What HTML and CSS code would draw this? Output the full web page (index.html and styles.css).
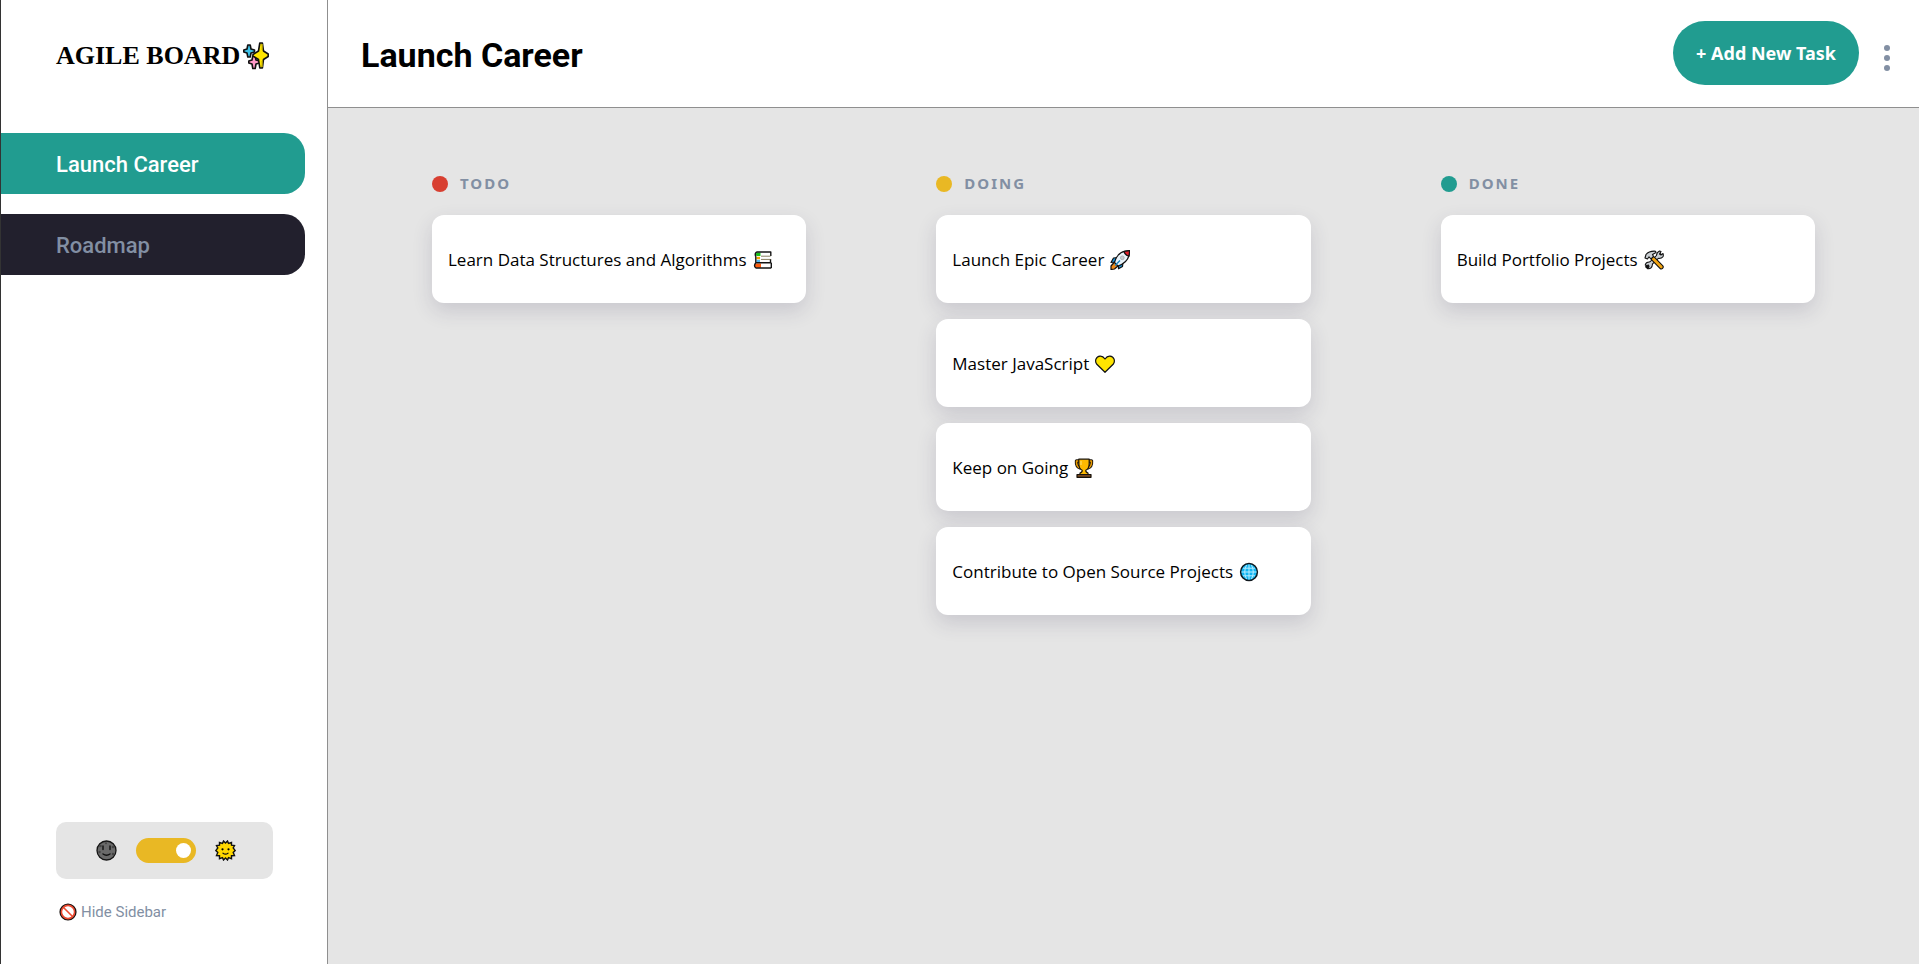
FILE: index.html
```html
<!DOCTYPE html>
<html lang="en">
<head>
<meta charset="utf-8">
<title>Agile Board</title>
<link rel="stylesheet" href="styles.css">
</head>
<body>
<div class="app">
  <aside class="sidebar">
    <div class="logo">
      <span>AGILE BOARD</span>
      <svg class="logo-icon" viewBox="0 0 26 28" aria-hidden="true" stroke="#111" stroke-width="1.6" stroke-linejoin="round">
        <path fill="#3fc4ea" d="M4.800 3H7.200L8 7L11.500 8V10L8 11L7.200 15H4.800L4 11L.8 10V8L4 7Z"/>
        <path fill="#ff9ac8" d="M9.800 14H12.200L13 18L16.500 19V21L13 22L12.200 26.500H9.800L9 22L5.800 21V19L9 18Z"/>
        <path fill="#ffe500" d="M16.800 1H19.400L20.500 9L25.200 12V14.500L20.500 17.500L19.400 26H16.800L15.500 17.500L10 14V12.500L15.500 9Z"/>
        <path fill="none" stroke="#a89400" stroke-width="1.200" d="M19.300 2V8M19.300 19V25"/>
      </svg>
    </div>
    <nav class="boards" aria-label="Boards">
      <button class="board active" type="button">Launch Career</button>
      <button class="board" type="button">Roadmap</button>
    </nav>
    <div class="sidebar-foot">
      <div class="theme">
        <svg class="face" viewBox="0 0 21 21" aria-hidden="true">
          <circle cx="10.500" cy="10.500" r="9.500" fill="#6a6a6a" stroke="#151515" stroke-width="1.300"/>
          <g fill="#444"><circle cx="4.500" cy="6" r="1.300"/><circle cx="3.500" cy="12" r="1.200"/><circle cx="17" cy="7" r="1.300"/><circle cx="17" cy="14" r="1.200"/><circle cx="10" cy="3.300" r="1"/></g>
          <path d="M7 6v3.500M14 6v3.500M7 14q3.500 2.400 7 0" fill="none" stroke="#111" stroke-width="1.400" stroke-linecap="round"/>
        </svg>
        <label class="switch">
          <input type="checkbox" role="switch" aria-label="Light theme" checked>
        </label>
        <svg class="face" viewBox="0 0 21 21" aria-hidden="true">
          <path fill="#ffd800" stroke="#111" stroke-width="1.400" stroke-linejoin="miter" d="M10.500 3L12.500 1L13.500 3.500L16.500 2.500L16.500 5.200L19.500 5.500L18.200 8L20.200 10.500L18.200 12.500L19.500 15.500L16.500 15.700L16.500 18.700L13.500 17.700L12.500 20L10.500 18L8.500 20L7.500 17.700L4.500 18.700L4.500 15.700L1.500 15.500L2.800 12.500L.8 10.500L2.800 8L1.500 5.500L4.500 5.200L4.500 2.500L7.500 3.500L8.500 1Z"/>
          <circle cx="7.500" cy="9.300" r="1.100"/><circle cx="13.500" cy="9.300" r="1.100"/>
          <path d="M8 13.200q2.500 2 5 0" fill="none" stroke="#111" stroke-width="1.200" stroke-linecap="round"/>
        </svg>
      </div>
      <button class="hide" type="button">
        <svg class="hide-icon" viewBox="0 0 18 18" aria-hidden="true" fill="none">
          <circle cx="9" cy="9" r="7.400" fill="#fff" stroke="#16110f" stroke-width="2.400"/>
          <circle cx="9" cy="9" r="6.600" stroke="#ee4b32" stroke-width="1.600"/>
          <path d="M4.500 4.500l9 9" stroke="#ee4b32" stroke-width="1.600"/>
        </svg>
        <span>Hide Sidebar</span>
      </button>
    </div>
  </aside>

  <div class="content">
    <header class="topbar">
      <h1>Launch Career</h1>
      <div class="actions">
        <button class="add" type="button">+ Add New Task</button>
        <button class="more" type="button" aria-label="Board options">
          <svg viewBox="0 0 6 26" aria-hidden="true"><circle cx="3" cy="3" r="3"/><circle cx="3" cy="13" r="3"/><circle cx="3" cy="23" r="3"/></svg>
        </button>
      </div>
    </header>

    <main class="columns">
      <section class="column">
        <h2><span class="dot todo"></span>TODO</h2>
        <article class="card">
          <span>Learn Data Structures and Algorithms</span>
          <svg viewBox="0 0 20 20" aria-hidden="true">
            <path fill="#fff" d="M3.500 2H18V18H2.500V8z"/>
            <path fill="#17bf1c" d="M3.500 2.500H7.500V6H3.500q-1.500-1.700 0-3.500z"/>
            <path fill="#f6a800" d="M3.500 6.800H7V9.200H3.500z"/>
            <path fill="#52b9f2" d="M3.500 9.800H7V12.800H3.500z"/>
            <path fill="#ff5b0c" d="M2.500 13.500H8V17.800H2.500q-2-2 0-4.300z"/>
            <path stroke="#141414" stroke-width="1.400" fill="none" stroke-linejoin="round" d="M18.300 2H4Q1.500 2.600 2.600 6.200M2.800 6.200V12.800H18.300M18.300 18H3Q.2 16 2.800 12.800M17.800 2V6M17.500 9V12.800M18.300 12.800V18"/>
            <path stroke="#8a8060" stroke-width="1" d="M8 6.200H17.500M8 9.400H17.500"/>
          </svg>
        </article>
      </section>

      <section class="column">
        <h2><span class="dot doing"></span>DOING</h2>
        <article class="card">
          <span>Launch Epic Career</span>
          <svg viewBox="0 0 20 20" aria-hidden="true" stroke="#111" stroke-width="1.200" stroke-linejoin="round">
            <path fill="#199be8" d="M8 7.500L3.500 8L1 12.500L5 12zM13 12L12.500 16.500L8.500 18.800L8.500 15z"/>
            <path fill="#f28a16" d="M4.500 12L1 16V19.500L4.500 19L8.500 15.500z"/>
            <path fill="#e9f3fa" d="M4.500 12.500Q7 3 15 1.200L19.500.7L19 5.500Q17 13 8 16z"/>
            <path fill="#e5202c" d="M14 1.500L19.700.6L19 6.200Q15 5.500 14 1.500z"/>
            <circle cx="12.300" cy="7.800" r="1.900" fill="#c6cbd0" stroke="#999" stroke-width=".6"/>
            <path d="M5 15.500L10 10.500" stroke="#1584c4" stroke-width="1.500"/>
          </svg>
        </article>
        <article class="card">
          <span>Master JavaScript</span>
          <svg viewBox="0 0 20 20" aria-hidden="true"><path fill="#ffe500" stroke="#111" stroke-width="1.200" stroke-linejoin="round" d="M10 18.300L1.600 10C-.5 7 1 2.500 5 2.200Q8 2 10 5Q12 2 15 2.200C19 2.500 20.500 7 18.400 10z"/></svg>
        </article>
        <article class="card">
          <span>Keep on Going</span>
          <svg viewBox="0 0 20 20" aria-hidden="true" stroke="#17120b" stroke-width="1.200" stroke-linejoin="round">
            <path fill="none" stroke-width="3.400" d="M5 3H2.500Q2 9 6.500 10M15 3H17.500Q18 9 13.500 10"/>
            <path fill="none" stroke="#e79a00" stroke-width="1.500" d="M5 3H2.500Q2 9 6.500 10M15 3H17.500Q18 9 13.500 10"/>
            <path fill="#fdb900" d="M4.800 1.200H15.200V6Q15 11 11.800 12.300Q11.500 14 14 15V16.500H6V15Q8.500 14 8.200 12.300Q5 11 4.800 6z"/>
            <path fill="#76491f" d="M3 16.500H17V19.300H3z"/>
            <path stroke="#ffdc63" d="M7 3v4"/>
          </svg>
        </article>
        <article class="card">
          <span>Contribute to Open Source Projects</span>
          <svg viewBox="0 0 20 20" aria-hidden="true" fill="none">
            <circle cx="10" cy="10" r="8.400" fill="#10b5f2" stroke="#10171c" stroke-width="1.500"/>
            <path stroke="#b9edff" stroke-width="1" d="M10 2.500V17.500M2.500 10H17.500M4 6.200H16M4 13.800H16M7.500 3Q4 10 7.500 17M12.500 3Q16 10 12.500 17"/>
          </svg>
        </article>
      </section>

      <section class="column">
        <h2><span class="dot done"></span>DONE</h2>
        <article class="card">
          <span>Build Portfolio Projects</span>
          <svg viewBox="0 0 20 20" aria-hidden="true" stroke-linecap="round" stroke-linejoin="round" fill="none">
            <path stroke="#111" stroke-width="4.400" d="M3.500 16.500L15.500 5"/>
            <path fill="#cbd0d4" stroke="#111" stroke-width="1.100" d="M13 7.500Q11.500 3 15.500 1L17 1.500L15.500 4L17 5L19 3.500Q20.500 8 15 8.500zM6.500 12Q2 11.500 1.200 15L3 15.500L4.500 15L5 17L3.500 18.700Q8 19.500 8.500 14z"/>
            <path stroke="#cbd0d4" stroke-width="2.400" d="M6 14L14.500 5.800"/>
            <path stroke="#111" stroke-width="4.800" d="M9 8.500L17.300 17"/>
            <path stroke="#f3a512" stroke-width="2.700" d="M9 8.500L17.300 17"/>
            <path fill="#cbd0d4" stroke="#111" stroke-width="1.100" d="M1 8L2 4.500Q5 .8 11.500 1.200L12 2.500L8.500 4.500L9.500 6.500L7 9L5 6.800L3.500 9z"/>
          </svg>
        </article>
      </section>
    </main>
  </div>
</div>
</body>
</html>
```

FILE: styles.css
```css
* { box-sizing: border-box; }

body {
  margin: 0;
  font-family: Roboto, "Noto Sans", sans-serif;
  color: #000;
  background: #e5e5e5;
}

button {
  border: 0;
  padding: 0;
  background: none;
  font-family: inherit;
  cursor: pointer;
}

svg { display: block; flex: none; }

.app { display: flex; min-height: 100vh; }

.sidebar {
  flex: 0 0 328px;
  display: flex;
  flex-direction: column;
  background: #fff;
  border-left: 1px solid #333;
  border-right: 1px solid #8f8f8f;
}

.logo {
  display: flex;
  align-items: center;
  gap: 3px;
  height: 112px;
  padding-left: 55px;
  font: bold 26px/30px "Liberation Serif", serif;
}

.logo-icon { width: 26px; height: 28px; }

.boards {
  display: flex;
  flex-direction: column;
  gap: 20px;
  padding: 21px 22px 0 0;
}

.board {
  height: 61px;
  padding: 2px 0 0 55px;
  border-radius: 0 21px 21px 0;
  background: #22202d;
  color: #828fa3;
  font-size: 22px;
  font-weight: 500;
  text-align: left;
}

.board.active { background: #219c90; color: #fff; }

.sidebar-foot { margin-top: auto; padding: 0 54px 39px 55px; }

.theme {
  display: flex;
  align-items: center;
  justify-content: center;
  gap: 19px;
  height: 57px;
  padding-left: 2px;
  border-radius: 10px;
  background: #e5e5e5;
}

.face { width: 21px; height: 21px; }

.switch { display: block; height: 25px; }

.switch input {
  appearance: none;
  display: flex;
  align-items: center;
  width: 60px;
  height: 25px;
  margin: 0;
  padding: 0 5px;
  border-radius: 13px;
  background: #828fa3;
}

.switch input::before {
  content: "";
  width: 15px;
  height: 15px;
  border-radius: 50%;
  background: #fff;
}

.switch input:checked { justify-content: flex-end; background: #e9b824; }

.hide {
  display: flex;
  align-items: center;
  gap: 4px;
  margin-top: 20px;
  padding-left: 3px;
  height: 26px;
  color: #828fa3;
  font-size: 15px;
  line-height: 26px;
}

.hide-icon { width: 18px; height: 18px; }

.content { flex: 1; min-width: 0; }

.topbar {
  display: flex;
  align-items: center;
  justify-content: space-between;
  height: 108px;
  padding: 0 29px 2px 33px;
  background: #fff;
  border-bottom: 1px solid #8f8f8f;
}

h1 { margin: 0; padding-top: 4px; font-size: 34px; line-height: 40px; }

.actions { display: flex; align-items: center; gap: 25px; }

.add {
  height: 64px;
  padding: 0 23px;
  border-radius: 32px;
  background: #219c90;
  color: #fff;
  font-family: "Noto Sans", sans-serif;
  font-size: 18px;
  font-weight: 700;
}

.more { padding-top: 10px; }

.more svg { width: 6px; height: 26px; fill: #828fa3; }

.columns {
  display: grid;
  grid-template-columns: repeat(3, 1fr);
  gap: 130px;
  padding: 64px 104px;
}

.column { display: flex; flex-direction: column; gap: 16px; min-width: 0; }

h2 {
  display: flex;
  align-items: center;
  gap: 12px;
  margin: 0 0 4px;
  color: #828fa3;
  font-family: "Noto Sans", sans-serif;
  font-size: 15px;
  line-height: 23px;
  letter-spacing: 2px;
}

.dot { width: 16px; height: 16px; border-radius: 50%; }
.todo { background: #d83f31; }
.doing { background: #e9b824; }
.done { background: #219c90; }

.card {
  display: flex;
  align-items: center;
  gap: 6px;
  min-height: 88px;
  padding: 18px 16px 16px;
  border-radius: 12px;
  background: #fff;
  box-shadow: 0 8px 20px rgba(54, 48, 84, 0.16);
  font-family: "Open Sans", sans-serif;
  font-size: 17px;
  line-height: 24px;
}

.card svg { width: 20px; height: 20px; }
```
